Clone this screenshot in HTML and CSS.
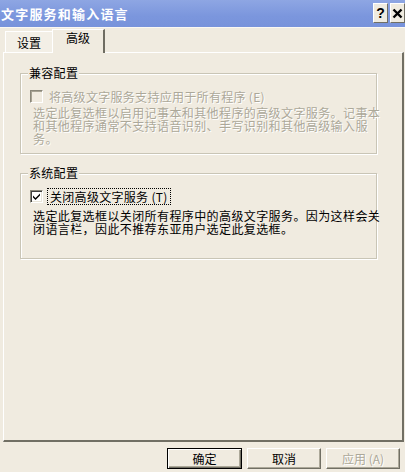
FILE: index.html
```html
<!DOCTYPE html>
<html lang="zh-CN">
<head>
<meta charset="utf-8">
<link rel="stylesheet" href="styles.css">
</head>
<body>
<div class="window">
  <div class="titlebar">
    <span class="title">文字服务和输入语言</span>
    <div class="tb-btns">
      <span class="tb-btn">?</span>
      <span class="tb-btn">
        <svg width="11" height="11" viewBox="0 0 11 11"><path d="M1.5 1.5 L9.5 9.5 M9.5 1.5 L1.5 9.5" stroke="#000" stroke-width="2.4"/></svg>
      </span>
    </div>
  </div>
  <div class="main">
    <div class="tabs">
      <div class="tab">设置</div>
      <div class="tab active">高级</div>
    </div>
    <div class="panel">
      <div class="group g1">
        <div class="group-title">兼容配置</div>
        <div class="check-row disabled">
          <span class="cb cb-disabled"></span>
          <span class="cb-label">将高级文字服务支持应用于所有程序 (E)</span>
        </div>
        <p class="desc disabled-text">选定此复选框以启用记事本和其他程序的高级文字服务。记事本<br>和其他程序通常不支持语音识别、手写识别和其他高级输入服<br>务。</p>
      </div>
      <div class="group g2">
        <div class="group-title">系统配置</div>
        <div class="check-row">
          <span class="cb cb-checked">
            <svg width="9" height="9" viewBox="0 0 9 9"><path d="M1 3.5 L3.5 6 L8 1.5 L8 3.5 L3.5 8 L1 5.5 Z" fill="#000"/></svg>
          </span>
          <span class="cb-label focus">关闭高级文字服务 (T)</span>
        </div>
        <p class="desc">选定此复选框以关闭所有程序中的高级文字服务。因为这样会关<br>闭语言栏，因此不推荐东亚用户选定此复选框。</p>
      </div>
    </div>
    <div class="buttons">
      <div class="btn default"><span>确定</span></div>
      <div class="btn"><span>取消</span></div>
      <div class="btn btn-disabled"><span>应用 (A)</span></div>
    </div>
  </div>
</div>
</body>
</html>
```
FILE: styles.css
```css
html, body {
  margin: 0;
  padding: 0;
}
body {
  width: 405px;
  height: 472px;
  overflow: hidden;
  background: #f0ebe0;
  font-family: "Noto Sans CJK SC", "Noto Sans", sans-serif;
  font-size: 12px;
  color: #000;
}
.window {
  width: 405px;
  height: 472px;
  display: flex;
  flex-direction: column;
}
.titlebar {
  height: 27px;
  flex: none;
  display: flex;
  align-items: center;
  justify-content: space-between;
  background: linear-gradient(#8ea6e3, #7b96dd 60%, #7893db);
}
.title {
  color: #fff;
  font-weight: bold;
  font-size: 13px;
  letter-spacing: 1.2px;
  padding-left: 1px;
  line-height: 16px;
}
.tb-btns {
  display: flex;
  gap: 2px;
  height: 20px;
  align-self: flex-start;
  margin-top: 3px;
}
.tb-btn {
  width: 15px;
  height: 20px;
  box-sizing: border-box;
  background: #efebe0;
  border-top: 1px solid #fff;
  border-left: 1px solid #fff;
  border-right: 1px solid #716f64;
  border-bottom: 1px solid #716f64;
  display: flex;
  align-items: center;
  justify-content: center;
  font-family: "Liberation Sans", sans-serif;
  font-weight: bold;
  font-size: 14px;
  line-height: 1;
}
.main {
  flex: 1;
  display: flex;
  flex-direction: column;
  padding: 1px 1px 0 3px;
  border-top: 1px solid #fbf8f2;
}
.tabs {
  height: 23px;
  display: flex;
  align-items: flex-end;
  padding-left: 2px;
}
.tab {
  width: 47px;
  height: 21px;
  box-sizing: border-box;
  background: #f3efe6;
  border-top: 1px solid #fff;
  border-left: 1px solid #fff;
  line-height: 18px;
  padding-top: 2px;
  text-align: center;
}
.tab.active {
  width: 53px;
  height: 24px;
  padding-top: 0;
  line-height: 16px;
  background: #f0ebe0;
  border-right: 2px solid #6f6d62;
  margin-bottom: -1px;
  position: relative;
  z-index: 1;
}
.panel {
  height: 390px;
  box-sizing: border-box;
  border-top: 1px solid #fff;
  border-left: 1px solid #fff;
  border-right: 2px solid #716f64;
  border-bottom: 2px solid #716f64;
  padding: 20px 0 0 16px;
}
.group {
  width: 357px;
  box-sizing: border-box;
  border: 1px solid #c9c5b6;
  box-shadow: inset 1px 1px #fff, 1px 1px #fff;
  padding: 0 0 0 9px;
}
.g1 {
  height: 81px;
}
.g2 {
  height: 86px;
  margin-top: 19px;
}
.group-title {
  display: block;
  width: fit-content;
  margin: -8px 0 0 -2px;
  padding: 0 1px;
  background: #f0ebe0;
  line-height: 14px;
  height: 14px;
  letter-spacing: 0.3px;
}
.check-row {
  display: flex;
  align-items: center;
  height: 15px;
  margin-top: 9px;
}
.cb {
  width: 13px;
  height: 13px;
  box-sizing: border-box;
  border-top: 1px solid #8a877a;
  border-left: 1px solid #8a877a;
  border-right: 1px solid #fff;
  border-bottom: 1px solid #fff;
  box-shadow: inset 1px 1px #404040, inset -1px -1px #e8e4d8;
  background: #fff;
  display: flex;
  align-items: center;
  justify-content: center;
  flex: none;
}
.cb-disabled {
  background: #f0ebe0;
  box-shadow: inset 1px 1px #a7a394;
}
.cb-label {
  margin-left: 6px;
  line-height: 13px;
  white-space: nowrap;
  letter-spacing: 0.3px;
}
.disabled .cb-label,
.disabled-text {
  color: #aca899;
  text-shadow: 1px 1px 0 #fff;
}
.cb-label.focus {
  outline: 1px dotted #000;
  outline-offset: 1px;
  padding: 0 1px;
}
.desc {
  margin: 2px 0 0 3px;
  line-height: 13px;
  white-space: nowrap;
  letter-spacing: 0.4px;
}
.g2 .desc {
  margin-top: 5px;
}
.buttons {
  display: flex;
  justify-content: flex-end;
  padding: 6px 4px 0 0;
  gap: 5px;
}
.btn {
  width: 74px;
  height: 21px;
  box-sizing: border-box;
  border-top: 1px solid #fff;
  border-left: 1px solid #fff;
  border-right: 1px solid #716f64;
  border-bottom: 1px solid #716f64;
  box-shadow: inset -1px -1px #aca899;
  display: flex;
  align-items: center;
  justify-content: center;
}
.btn.default {
  border: 1px solid #000;
  box-shadow: inset 1px 1px #fff, inset -1px -1px #716f64, inset -2px -2px #aca899;
  width: 75px;
}
.btn-disabled {
  color: #aca899;
  text-shadow: 1px 1px 0 #fff;
}
```
